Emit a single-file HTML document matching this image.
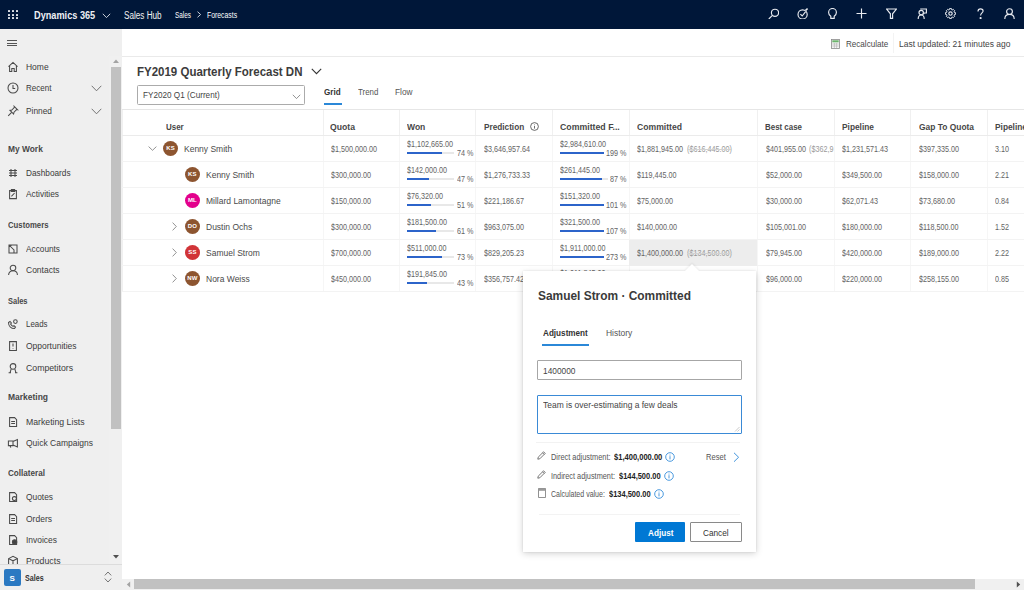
<!DOCTYPE html>
<html><head><meta charset="utf-8"><style>
html,body{margin:0;padding:0;}
body{width:1024px;height:590px;overflow:hidden;position:relative;background:#fff;font-family:"Liberation Sans",sans-serif;}
.t{position:absolute;white-space:nowrap;line-height:1;transform-origin:0 0;}
.r{position:absolute;}
.av{width:15px;height:15px;border-radius:50%;color:#fff;font-size:6px;font-weight:bold;line-height:15px;text-align:center;letter-spacing:0.1px;}
</style></head><body>
<div class="r" style="left:0px;top:0px;width:1024px;height:29px;background:#001739;"></div>
<div class="r" style="left:8.3px;top:10.1px;width:2px;height:2px;background:#eef1f6;border-radius:0.4px;"></div>
<div class="r" style="left:8.3px;top:13.6px;width:2px;height:2px;background:#eef1f6;border-radius:0.4px;"></div>
<div class="r" style="left:8.3px;top:17.1px;width:2px;height:2px;background:#eef1f6;border-radius:0.4px;"></div>
<div class="r" style="left:12.200000000000001px;top:10.1px;width:2px;height:2px;background:#eef1f6;border-radius:0.4px;"></div>
<div class="r" style="left:12.200000000000001px;top:13.6px;width:2px;height:2px;background:#eef1f6;border-radius:0.4px;"></div>
<div class="r" style="left:12.200000000000001px;top:17.1px;width:2px;height:2px;background:#eef1f6;border-radius:0.4px;"></div>
<div class="r" style="left:16.1px;top:10.1px;width:2px;height:2px;background:#eef1f6;border-radius:0.4px;"></div>
<div class="r" style="left:16.1px;top:13.6px;width:2px;height:2px;background:#eef1f6;border-radius:0.4px;"></div>
<div class="r" style="left:16.1px;top:17.1px;width:2px;height:2px;background:#eef1f6;border-radius:0.4px;"></div>
<div class="t" style="left:33.80px;top:10.00px;font-size:10.5px;color:#eef0f4;font-weight:bold;transform:scaleX(0.8737);">Dynamics 365</div>
<svg class="r" style="left:102px;top:13px" width="9" height="6" viewBox="0 0 9 6"><path d="M0.8 0.8 L4.5 4.6 L8.2 0.8" fill="none" stroke="#dfe3ea" stroke-width="0.9"/></svg>
<div class="t" style="left:123.70px;top:11.00px;font-size:10px;color:#f2f2f2;transform:scaleX(0.8149);">Sales Hub</div>
<div class="t" style="left:175.00px;top:11.00px;font-size:8.8px;color:#fff;transform:scaleX(0.7268);">Sales</div>
<svg class="r" style="left:196px;top:11px" width="6" height="7" viewBox="0 0 6 7"><path d="M1.5 0.7 L4.6 3.5 L1.5 6.3" fill="none" stroke="#dfe3ea" stroke-width="0.9"/></svg>
<div class="t" style="left:207.30px;top:11.00px;font-size:8.8px;color:#fff;transform:scaleX(0.7791);">Forecasts</div>
<svg class="r" style="left:767.5px;top:7.6px" width="11" height="11.5" viewBox="0 0 11 11.5" fill="none" stroke="#e8ebf0" stroke-width="1.15"><circle cx="7" cy="4.8" r="3.6"/><path d="M4.4 7.4 L0.8 11"/></svg>
<svg class="r" style="left:796.5px;top:7.6px" width="11" height="11.5" viewBox="0 0 11 11.5" fill="none" stroke="#e8ebf0" stroke-width="1.15"><circle cx="5.6" cy="6.4" r="4.6"/><path d="M3.4 6.2 L5.2 8 L8.6 3.6"/><path d="M8.6 2.4 L10.6 0.6" stroke-width="1.6"/></svg>
<svg class="r" style="left:826.5px;top:7.6px" width="11" height="11.5" viewBox="0 0 11 11.5" fill="none" stroke="#e8ebf0" stroke-width="1.15"><path d="M3.8 8.2 C2.2 7 1.6 5.8 1.6 4.4 A3.9 3.9 0 0 1 9.4 4.4 C9.4 5.8 8.8 7 7.2 8.2 L7.2 10.4 L3.8 10.4 Z"/></svg>
<svg class="r" style="left:855.5px;top:7.6px" width="11" height="11.5" viewBox="0 0 11 11.5" fill="none" stroke="#e8ebf0" stroke-width="1.15"><path d="M5.5 0.5 V10.5 M0.5 5.5 H10.5"/></svg>
<svg class="r" style="left:885.5px;top:7.6px" width="11" height="11.5" viewBox="0 0 11 11.5" fill="none" stroke="#e8ebf0" stroke-width="1.15"><path d="M0.6 1 H10.4 L6.6 5.8 V10.4 H4.4 V5.8 Z"/></svg>
<svg class="r" style="left:915.5px;top:7.6px" width="11" height="11.5" viewBox="0 0 11 11.5" fill="none" stroke="#e8ebf0" stroke-width="1.15"><path d="M4.2 1 H10.4 V5 H8.4 L7.2 6.4 M2.2 11 C2.2 8.2 3.8 7 5.2 7 C6.6 7 8.2 8.2 8.2 11"/><circle cx="5.2" cy="4.6" r="2.2"/></svg>
<svg class="r" style="left:944.5px;top:7.6px" width="11" height="11.5" viewBox="0 0 11 11.5" fill="none" stroke="#e8ebf0" stroke-width="1.15"><circle cx="5.5" cy="5.5" r="1.7"/><path d="M10.40 4.51 L10.40 6.49 L9.19 6.76 L9.00 7.22 L9.67 8.26 L8.26 9.67 L7.22 9.00 L6.76 9.19 L6.49 10.40 L4.51 10.40 L4.24 9.19 L3.78 9.00 L2.74 9.67 L1.33 8.26 L2.00 7.22 L1.81 6.76 L0.60 6.49 L0.60 4.51 L1.81 4.24 L2.00 3.78 L1.33 2.74 L2.74 1.33 L3.78 2.00 L4.24 1.81 L4.51 0.60 L6.49 0.60 L6.76 1.81 L7.22 2.00 L8.26 1.33 L9.67 2.74 L9.00 3.78 L9.19 4.24 Z" stroke-width="1"/></svg>
<svg class="r" style="left:974.5px;top:7.6px" width="11" height="11.5" viewBox="0 0 11 11.5" fill="none" stroke="#e8ebf0" stroke-width="1.15"><path d="M3 3.4 C3 1.8 4.2 0.8 5.6 0.8 C7 0.8 8.1 1.8 8.1 3.1 C8.1 4.8 5.6 5.2 5.6 7.4"/><circle cx="5.6" cy="10" r="0.5" fill="#e8ebf0"/></svg>
<svg class="r" style="left:1003.5px;top:7.6px" width="11" height="11.5" viewBox="0 0 11 11.5" fill="none" stroke="#e8ebf0" stroke-width="1.15"><circle cx="5.5" cy="3.6" r="2.9"/><path d="M0.8 11 C0.8 7.8 3 6.4 5.5 6.4 C8 6.4 10.2 7.8 10.2 11"/></svg>
<div class="r" style="left:0px;top:29px;width:122px;height:561px;background:#efefef;"></div>
<div class="r" style="left:109px;top:56px;width:13px;height:523px;background:#f0f0f0;"></div>
<div class="r" style="left:111px;top:67px;width:10px;height:362px;background:#c1c1c1;"></div>
<svg class="r" style="left:112px;top:58px" width="8" height="6" viewBox="0 0 8 6"><path d="M1 5 L4 1.5 L7 5 Z" fill="#a3a3a3"/></svg>
<svg class="r" style="left:112px;top:554px" width="8" height="6" viewBox="0 0 8 6"><path d="M1 1 L4 4.5 L7 1 Z" fill="#505050"/></svg>
<div class="r" style="left:7px;top:40.0px;width:10px;height:1.1px;background:#555;"></div>
<div class="r" style="left:7px;top:42.6px;width:10px;height:1.1px;background:#555;"></div>
<div class="r" style="left:7px;top:45.2px;width:10px;height:1.1px;background:#555;"></div>
<div class="t" style="left:26.20px;top:63.00px;font-size:9px;color:#3b3b3b;transform:scaleX(0.9413);">Home</div>
<svg class="r" style="left:7px;top:61.0px" width="12" height="12" viewBox="0 0 12 12" fill="none" stroke="#4a4a4a" stroke-width="1.05"><path d="M1.5 5.6 L6 1.4 L10.5 5.6 M2.6 4.8 V10.4 H4.8 V7.4 H7.2 V10.4 H9.4 V4.8"/></svg>
<div class="t" style="left:26.20px;top:84.00px;font-size:9px;color:#3b3b3b;transform:scaleX(0.8907);">Recent</div>
<svg class="r" style="left:7px;top:82.2px" width="12" height="12" viewBox="0 0 12 12" fill="none" stroke="#4a4a4a" stroke-width="1.05"><circle cx="6" cy="6" r="5"/><path d="M6 3 V6.4 H8.2"/></svg>
<div class="t" style="left:26.20px;top:107.00px;font-size:9px;color:#3b3b3b;transform:scaleX(0.9277);">Pinned</div>
<svg class="r" style="left:7px;top:105.2px" width="12" height="12" viewBox="0 0 12 12" fill="none" stroke="#4a4a4a" stroke-width="1.05"><path d="M1.2 10.8 L4.4 7.6 M3 5.4 L6.6 9 L7 7.2 L9.6 4.6 L10.6 4.8 L7.2 1.4 L7.4 2.4 L4.8 5 Z"/></svg>
<div class="t" style="left:7.70px;top:145.00px;font-size:9px;color:#474747;font-weight:bold;transform:scaleX(0.9320);">My Work</div>
<div class="t" style="left:7.70px;top:221.00px;font-size:9px;color:#474747;font-weight:bold;transform:scaleX(0.8615);">Customers</div>
<div class="t" style="left:7.70px;top:297.00px;font-size:9px;color:#474747;font-weight:bold;transform:scaleX(0.8291);">Sales</div>
<div class="t" style="left:7.70px;top:393.00px;font-size:9px;color:#474747;font-weight:bold;transform:scaleX(0.9410);">Marketing</div>
<div class="t" style="left:7.70px;top:469.00px;font-size:9px;color:#474747;font-weight:bold;transform:scaleX(0.9021);">Collateral</div>
<div class="t" style="left:26.30px;top:169.00px;font-size:9px;color:#3b3b3b;transform:scaleX(0.9190);">Dashboards</div>
<svg class="r" style="left:7px;top:167px" width="12" height="12" viewBox="0 0 12 12" fill="none" stroke="#4a4a4a" stroke-width="1.05"><path d="M2 3.5 H10 M2 6 H10 M2 8.5 H10 M4 2 V10 M8 2 V10"/></svg>
<div class="t" style="left:26.30px;top:190.00px;font-size:9px;color:#3b3b3b;transform:scaleX(0.9294);">Activities</div>
<svg class="r" style="left:7px;top:188.4px" width="12" height="12" viewBox="0 0 12 12" fill="none" stroke="#4a4a4a" stroke-width="1.05"><path d="M2.6 2.6 H9.4 V10.6 H2.6 Z M4.4 1.6 H7.6 V3.4 H4.4 Z M4.4 8.4 L7.6 5"/></svg>
<div class="t" style="left:26.30px;top:245.00px;font-size:9px;color:#3b3b3b;transform:scaleX(0.9184);">Accounts</div>
<svg class="r" style="left:7px;top:242.6px" width="12" height="12" viewBox="0 0 12 12" fill="none" stroke="#4a4a4a" stroke-width="1.05"><path d="M2 2 H10 V10 H2 Z M2 2 L7 7 V10 M4 2 V3"/></svg>
<div class="t" style="left:26.30px;top:266.00px;font-size:9px;color:#3b3b3b;transform:scaleX(0.9432);">Contacts</div>
<svg class="r" style="left:7px;top:264px" width="12" height="12" viewBox="0 0 12 12" fill="none" stroke="#4a4a4a" stroke-width="1.05"><circle cx="6" cy="4" r="2.8"/><path d="M1.6 11 C1.6 8.2 3.6 6.8 6 6.8 C8.4 6.8 10.4 8.2 10.4 11"/></svg>
<div class="t" style="left:26.30px;top:320.00px;font-size:9px;color:#3b3b3b;transform:scaleX(0.8768);">Leads</div>
<svg class="r" style="left:7px;top:318.2px" width="12" height="12" viewBox="0 0 12 12" fill="none" stroke="#4a4a4a" stroke-width="1.05"><path d="M1.5 4.5 C1.5 8 4 10.5 7.5 10.5 L8.5 9 L7 7.6 L6 8.4 C4.8 7.8 4.2 7.2 3.6 6 L4.4 5 L3 3.5 Z"/><circle cx="8.4" cy="3.6" r="1.8"/></svg>
<div class="t" style="left:26.30px;top:342.00px;font-size:9px;color:#3b3b3b;transform:scaleX(0.9434);">Opportunities</div>
<svg class="r" style="left:7px;top:339.9px" width="12" height="12" viewBox="0 0 12 12" fill="none" stroke="#4a4a4a" stroke-width="1.05"><path d="M2.6 1.6 H9.4 V10.4 H2.6 Z M6 3.6 V6.6 M6 8 V8.6"/></svg>
<div class="t" style="left:26.30px;top:364.00px;font-size:9px;color:#3b3b3b;transform:scaleX(0.9687);">Competitors</div>
<svg class="r" style="left:7px;top:361.5px" width="12" height="12" viewBox="0 0 12 12" fill="none" stroke="#4a4a4a" stroke-width="1.05"><circle cx="6" cy="4.4" r="2.8"/><path d="M3 10.8 L4.2 6.8 M9 10.8 L7.8 6.8 M1.6 10.8 H4 M8 10.8 H10.4"/></svg>
<div class="t" style="left:26.30px;top:418.00px;font-size:9px;color:#3b3b3b;transform:scaleX(0.9666);">Marketing Lists</div>
<svg class="r" style="left:7px;top:415.7px" width="12" height="12" viewBox="0 0 12 12" fill="none" stroke="#4a4a4a" stroke-width="1.05"><path d="M2.6 1.6 H7.6 L9.6 3.6 V10.4 H2.6 Z M4.2 5.4 H8 M4.2 7.4 H8"/></svg>
<div class="t" style="left:26.30px;top:439.00px;font-size:9px;color:#3b3b3b;transform:scaleX(0.9433);">Quick Campaigns</div>
<svg class="r" style="left:7px;top:436.8px" width="12" height="12" viewBox="0 0 12 12" fill="none" stroke="#4a4a4a" stroke-width="1.05"><path d="M1.4 4 H6 V8.6 H1.4 Z M6 4.6 L10.4 2.6 V10 L6 8 M3 8.6 L3.8 10.6"/></svg>
<div class="t" style="left:26.30px;top:493.00px;font-size:9px;color:#3b3b3b;transform:scaleX(0.9305);">Quotes</div>
<svg class="r" style="left:7px;top:491px" width="12" height="12" viewBox="0 0 12 12" fill="none" stroke="#4a4a4a" stroke-width="1.05"><path d="M2.6 1.6 H7.6 L9.6 3.6 V10.4 H2.6 Z"/><circle cx="7.4" cy="7.6" r="2"/></svg>
<div class="t" style="left:26.30px;top:515.00px;font-size:9px;color:#3b3b3b;transform:scaleX(0.9452);">Orders</div>
<svg class="r" style="left:7px;top:512.6px" width="12" height="12" viewBox="0 0 12 12" fill="none" stroke="#4a4a4a" stroke-width="1.05"><path d="M2.6 1.6 H7.6 L9.6 3.6 V10.4 H2.6 Z M4.2 5.4 H8 M4.2 7.4 H8"/></svg>
<div class="t" style="left:26.30px;top:536.00px;font-size:9px;color:#3b3b3b;transform:scaleX(0.9389);">Invoices</div>
<svg class="r" style="left:7px;top:534.2px" width="12" height="12" viewBox="0 0 12 12" fill="none" stroke="#4a4a4a" stroke-width="1.05"><path d="M2.6 1.6 H7.6 L9.6 3.6 V10.4 H2.6 Z"/><circle cx="7.6" cy="8" r="2.2" fill="#444"/></svg>
<div class="t" style="left:26.30px;top:557.00px;font-size:9px;color:#3b3b3b;transform:scaleX(0.9713);">Products</div>
<svg class="r" style="left:7px;top:555.4px" width="12" height="12" viewBox="0 0 12 12" fill="none" stroke="#4a4a4a" stroke-width="1.05"><path d="M1.6 3.6 L6 1.4 L10.4 3.6 V10.4 H1.6 Z M1.6 3.6 L6 5.8 L10.4 3.6 M6 5.8 V10.4"/></svg>
<svg class="r" style="left:91px;top:85.1px" width="11" height="7" viewBox="0 0 11 7"><path d="M0.7 0.8 L5.5 5.8 L10.3 0.8" fill="none" stroke="#666" stroke-width="0.9"/></svg>
<svg class="r" style="left:91px;top:107.6px" width="11" height="7" viewBox="0 0 11 7"><path d="M0.7 0.8 L5.5 5.8 L10.3 0.8" fill="none" stroke="#666" stroke-width="0.9"/></svg>
<div class="r" style="left:0px;top:564px;width:122px;height:26px;background:#efefef;border-top:1px solid #dcdcdc;"></div>
<div class="r" style="left:4px;top:569px;width:17px;height:17px;background:#2b79c2;border-radius:2px;"></div>
<div class="t" style="left:9.60px;top:575.00px;font-size:8px;color:#fff;font-weight:bold;">S</div>
<div class="t" style="left:25.30px;top:574.00px;font-size:9px;color:#333;font-weight:bold;transform:scaleX(0.7908);">Sales</div>
<svg class="r" style="left:104px;top:571px" width="8" height="12" viewBox="0 0 8 12"><path d="M0.8 4.4 L4 1 L7.2 4.4 M0.8 7.6 L4 11 L7.2 7.6" fill="none" stroke="#666" stroke-width="0.9"/></svg>
<div class="r" style="left:122px;top:56px;width:902px;height:1px;background:#eaeaea;"></div>
<svg class="r" style="left:831px;top:38.5px" width="9" height="10" viewBox="0 0 9 10"><rect x="0.5" y="0.5" width="8" height="9" fill="#f4f4f4" stroke="#8a8a8a" stroke-width="0.8"/><rect x="1.3" y="1.3" width="6.4" height="2" fill="#6bb36b"/><path d="M1.3 5 H7.7 M1.3 7 H7.7 M3.4 4 V9 M5.6 4 V9" stroke="#b0b0b0" stroke-width="0.6"/></svg>
<div class="t" style="left:845.50px;top:39.00px;font-size:9.6px;color:#484848;transform:scaleX(0.8413);">Recalculate</div>
<div class="r" style="left:892.5px;top:33px;width:1px;height:20px;background:#f3f3f3;"></div>
<div class="t" style="left:898.70px;top:39.00px;font-size:9.6px;color:#444;transform:scaleX(0.8815);">Last updated: 21 minutes ago</div>
<div class="t" style="left:137.40px;top:66.00px;font-size:12.8px;color:#3c3c3c;font-weight:bold;transform:scaleX(0.8982);">FY2019 Quarterly Forecast DN</div>
<svg class="r" style="left:310.5px;top:67.5px" width="11" height="7" viewBox="0 0 11 7"><path d="M0.8 0.9 L5.5 5.6 L10.2 0.9" fill="none" stroke="#333" stroke-width="1.1"/></svg>
<div class="r" style="left:137px;top:85px;width:167.5px;height:19.5px;background:#fff;box-sizing:border-box;border:1px solid #ababab;border-radius:1.5px;"></div>
<div class="t" style="left:142.70px;top:91.00px;font-size:9.2px;color:#444;transform:scaleX(0.8887);">FY2020 Q1 (Current)</div>
<svg class="r" style="left:291.5px;top:94px" width="9" height="6" viewBox="0 0 9 6"><path d="M0.8 0.8 L4.5 4.6 L8.2 0.8" fill="none" stroke="#777" stroke-width="0.8"/></svg>
<div class="t" style="left:324.40px;top:87.00px;font-size:9.5px;color:#333;font-weight:bold;transform:scaleX(0.8500);">Grid</div>
<div class="r" style="left:323.8px;top:103px;width:17.8px;height:2px;background:#2b88d8;"></div>
<div class="t" style="left:357.70px;top:87.00px;font-size:9.5px;color:#555;transform:scaleX(0.8297);">Trend</div>
<div class="t" style="left:394.80px;top:87.00px;font-size:9.5px;color:#555;transform:scaleX(0.8725);">Flow</div>
<div class="r" style="left:122px;top:108.5px;width:902px;height:1.6px;background:#e6e6e6;"></div>
<div class="r" style="left:122px;top:110px;width:1px;height:182px;background:#f0f0f0;"></div>
<div class="r" style="left:322.8px;top:110px;width:1px;height:26px;background:#f0f0f0;"></div>
<div class="r" style="left:322.8px;top:136px;width:1px;height:156px;background:#f6f6f6;"></div>
<div class="r" style="left:398.8px;top:110px;width:1px;height:26px;background:#f0f0f0;"></div>
<div class="r" style="left:398.8px;top:136px;width:1px;height:156px;background:#f6f6f6;"></div>
<div class="r" style="left:475.2px;top:110px;width:1px;height:26px;background:#f0f0f0;"></div>
<div class="r" style="left:475.2px;top:136px;width:1px;height:156px;background:#f6f6f6;"></div>
<div class="r" style="left:552.2px;top:110px;width:1px;height:26px;background:#f0f0f0;"></div>
<div class="r" style="left:552.2px;top:136px;width:1px;height:156px;background:#f6f6f6;"></div>
<div class="r" style="left:629px;top:110px;width:1px;height:26px;background:#f0f0f0;"></div>
<div class="r" style="left:629px;top:136px;width:1px;height:156px;background:#f6f6f6;"></div>
<div class="r" style="left:757px;top:110px;width:1px;height:26px;background:#f0f0f0;"></div>
<div class="r" style="left:757px;top:136px;width:1px;height:156px;background:#f6f6f6;"></div>
<div class="r" style="left:834px;top:110px;width:1px;height:26px;background:#f0f0f0;"></div>
<div class="r" style="left:834px;top:136px;width:1px;height:156px;background:#f6f6f6;"></div>
<div class="r" style="left:910.4px;top:110px;width:1px;height:26px;background:#f0f0f0;"></div>
<div class="r" style="left:910.4px;top:136px;width:1px;height:156px;background:#f6f6f6;"></div>
<div class="r" style="left:987.4px;top:110px;width:1px;height:26px;background:#f0f0f0;"></div>
<div class="r" style="left:987.4px;top:136px;width:1px;height:156px;background:#f6f6f6;"></div>
<div class="r" style="left:122px;top:135px;width:902px;height:1px;background:#ebebeb;"></div>
<div class="r" style="left:122px;top:161px;width:902px;height:1px;background:#f3f3f3;"></div>
<div class="r" style="left:122px;top:187px;width:902px;height:1px;background:#f3f3f3;"></div>
<div class="r" style="left:122px;top:213px;width:902px;height:1px;background:#f3f3f3;"></div>
<div class="r" style="left:122px;top:239px;width:902px;height:1px;background:#f3f3f3;"></div>
<div class="r" style="left:122px;top:265px;width:902px;height:1px;background:#f3f3f3;"></div>
<div class="r" style="left:122px;top:291px;width:902px;height:1px;background:#f3f3f3;"></div>
<div class="r" style="left:629px;top:240px;width:127.5px;height:25.5px;background:#ededed;"></div>
<div class="t" style="left:166.00px;top:123.00px;font-size:9px;color:#474747;font-weight:bold;transform:scaleX(0.8844);">User</div>
<div class="t" style="left:330.00px;top:123.00px;font-size:9px;color:#474747;font-weight:bold;transform:scaleX(0.9616);">Quota</div>
<div class="t" style="left:406.90px;top:123.00px;font-size:9px;color:#474747;font-weight:bold;transform:scaleX(0.9468);">Won</div>
<div class="t" style="left:483.80px;top:123.00px;font-size:9px;color:#474747;font-weight:bold;transform:scaleX(0.9135);">Prediction</div>
<svg class="r" style="left:529.5px;top:121.5px" width="9" height="9" viewBox="0 0 9 9"><circle cx="4.5" cy="4.5" r="3.9" fill="none" stroke="#444" stroke-width="0.8"/><path d="M4.5 3.8 V6.6" stroke="#444" stroke-width="0.8"/><circle cx="4.5" cy="2.6" r="0.45" fill="#444"/></svg>
<div class="t" style="left:560.00px;top:123.00px;font-size:9px;color:#474747;font-weight:bold;transform:scaleX(0.9723);">Committed F...</div>
<div class="t" style="left:637.00px;top:123.00px;font-size:9px;color:#474747;font-weight:bold;transform:scaleX(0.9574);">Committed</div>
<div class="t" style="left:765.30px;top:123.00px;font-size:9px;color:#474747;font-weight:bold;transform:scaleX(0.8803);">Best case</div>
<div class="t" style="left:842.00px;top:123.00px;font-size:9px;color:#474747;font-weight:bold;transform:scaleX(0.9272);">Pipeline</div>
<div class="t" style="left:918.50px;top:123.00px;font-size:9px;color:#474747;font-weight:bold;transform:scaleX(0.9349);">Gap To Quota</div>
<div class="t" style="left:995.00px;top:123.00px;font-size:9px;color:#474747;font-weight:bold;transform:scaleX(0.9272);">Pipeline</div>
<div class="r" style="left:1024px;top:0px;width:0px;height:0px;background:none;"></div>
<svg class="r" style="left:148px;top:145.7px" width="9" height="5" viewBox="0 0 9 5"><path d="M0.6 0.6 L4.5 4.3 L8.4 0.6" fill="none" stroke="#777" stroke-width="0.8"/></svg>
<div class="r av" style="left:163.1px;top:140.5px;background:#8d5530">KS</div>
<div class="t" style="left:184.40px;top:145.00px;font-size:9.3px;color:#4a4a4a;transform:scaleX(0.9140);">Kenny Smith</div>
<div class="t" style="left:330.60px;top:145.00px;font-size:9px;color:#646464;transform:scaleX(0.8000);">$1,500,000.00</div>
<div class="t" style="left:407.20px;top:140.00px;font-size:9px;color:#646464;transform:scaleX(0.8000);">$1,102,665.00</div>
<div class="t" style="left:456.89px;top:149.00px;font-size:9px;color:#646464;transform:scaleX(0.8000);">74 %</div>
<div class="r" style="left:407.2px;top:152px;width:47.19px;height:2.2px;background:#e8e8e8;"></div>
<div class="r" style="left:407.2px;top:152px;width:34.92px;height:2.3px;background:#2c64ca;"></div>
<div class="t" style="left:483.80px;top:145.00px;font-size:9px;color:#646464;transform:scaleX(0.8000);">$3,646,957.64</div>
<div class="t" style="left:560.20px;top:140.00px;font-size:9px;color:#646464;transform:scaleX(0.8000);">$2,984,610.00</div>
<div class="t" style="left:606.38px;top:149.00px;font-size:9px;color:#646464;transform:scaleX(0.8000);">199 %</div>
<div class="r" style="left:560.2px;top:152px;width:43.68px;height:2.2px;background:#e8e8e8;"></div>
<div class="r" style="left:560.2px;top:152px;width:43.68px;height:2.3px;background:#2c64ca;"></div>
<div class="t" style="left:637.00px;top:145.00px;font-size:9px;color:#646464;transform:scaleX(0.8000);">$1,881,945.00</div>
<div class="t" style="left:686.65px;top:145.00px;font-size:9px;color:#9a9a9a;transform:scaleX(0.8000);text-decoration:line-through;text-decoration-color:#d2d2d2;">($616,445.00)</div>
<div class="t" style="left:765.60px;top:145.00px;font-size:9px;color:#646464;transform:scaleX(0.8000);">$401,955.00</div>
<div class="r" style="left:808px;top:143px;width:26px;height:12px;overflow:hidden">

<div class="t" style="left:1.00px;top:2.00px;font-size:9px;color:#9a9a9a;transform:scaleX(0.8000);">($362,9</div>
</div>
<div class="t" style="left:842.00px;top:145.00px;font-size:9px;color:#646464;transform:scaleX(0.8000);">$1,231,571.43</div>
<div class="t" style="left:918.50px;top:145.00px;font-size:9px;color:#646464;transform:scaleX(0.8000);">$397,335.00</div>
<div class="t" style="left:995.00px;top:145.00px;font-size:9px;color:#646464;transform:scaleX(0.8000);">3.10</div>
<div class="r av" style="left:184.9px;top:166.5px;background:#8d5530">KS</div>
<div class="t" style="left:205.90px;top:171.00px;font-size:9.3px;color:#4a4a4a;transform:scaleX(0.9140);">Kenny Smith</div>
<div class="t" style="left:330.60px;top:171.00px;font-size:9px;color:#646464;transform:scaleX(0.8000);">$300,000.00</div>
<div class="t" style="left:407.20px;top:166.00px;font-size:9px;color:#646464;transform:scaleX(0.8000);">$142,000.00</div>
<div class="t" style="left:456.89px;top:175.00px;font-size:9px;color:#646464;transform:scaleX(0.8000);">47 %</div>
<div class="r" style="left:407.2px;top:178px;width:47.19px;height:2.2px;background:#e8e8e8;"></div>
<div class="r" style="left:407.2px;top:178px;width:22.18px;height:2.3px;background:#2c64ca;"></div>
<div class="t" style="left:483.80px;top:171.00px;font-size:9px;color:#646464;transform:scaleX(0.8000);">$1,276,733.33</div>
<div class="t" style="left:560.20px;top:166.00px;font-size:9px;color:#646464;transform:scaleX(0.8000);">$261,445.00</div>
<div class="t" style="left:610.39px;top:175.00px;font-size:9px;color:#646464;transform:scaleX(0.8000);">87 %</div>
<div class="r" style="left:560.2px;top:178px;width:47.69px;height:2.2px;background:#e8e8e8;"></div>
<div class="r" style="left:560.2px;top:178px;width:41.49px;height:2.3px;background:#2c64ca;"></div>
<div class="t" style="left:637.00px;top:171.00px;font-size:9px;color:#646464;transform:scaleX(0.8000);">$119,445.00</div>
<div class="t" style="left:765.60px;top:171.00px;font-size:9px;color:#646464;transform:scaleX(0.8000);">$52,000.00</div>
<div class="t" style="left:842.00px;top:171.00px;font-size:9px;color:#646464;transform:scaleX(0.8000);">$349,500.00</div>
<div class="t" style="left:918.50px;top:171.00px;font-size:9px;color:#646464;transform:scaleX(0.8000);">$158,000.00</div>
<div class="t" style="left:995.00px;top:171.00px;font-size:9px;color:#646464;transform:scaleX(0.8000);">2.21</div>
<div class="r av" style="left:184.9px;top:192.5px;background:#e3008c">ML</div>
<div class="t" style="left:205.90px;top:197.00px;font-size:9.3px;color:#4a4a4a;transform:scaleX(0.9140);">Millard Lamontagne</div>
<div class="t" style="left:330.60px;top:197.00px;font-size:9px;color:#646464;transform:scaleX(0.8000);">$150,000.00</div>
<div class="t" style="left:407.20px;top:192.00px;font-size:9px;color:#646464;transform:scaleX(0.8000);">$76,320.00</div>
<div class="t" style="left:456.89px;top:201.00px;font-size:9px;color:#646464;transform:scaleX(0.8000);">51 %</div>
<div class="r" style="left:407.2px;top:204px;width:47.19px;height:2.2px;background:#e8e8e8;"></div>
<div class="r" style="left:407.2px;top:204px;width:24.07px;height:2.3px;background:#2c64ca;"></div>
<div class="t" style="left:483.80px;top:197.00px;font-size:9px;color:#646464;transform:scaleX(0.8000);">$221,186.67</div>
<div class="t" style="left:560.20px;top:192.00px;font-size:9px;color:#646464;transform:scaleX(0.8000);">$151,320.00</div>
<div class="t" style="left:606.38px;top:201.00px;font-size:9px;color:#646464;transform:scaleX(0.8000);">101 %</div>
<div class="r" style="left:560.2px;top:204px;width:43.68px;height:2.2px;background:#e8e8e8;"></div>
<div class="r" style="left:560.2px;top:204px;width:43.68px;height:2.3px;background:#2c64ca;"></div>
<div class="t" style="left:637.00px;top:197.00px;font-size:9px;color:#646464;transform:scaleX(0.8000);">$75,000.00</div>
<div class="t" style="left:765.60px;top:197.00px;font-size:9px;color:#646464;transform:scaleX(0.8000);">$30,000.00</div>
<div class="t" style="left:842.00px;top:197.00px;font-size:9px;color:#646464;transform:scaleX(0.8000);">$62,071.43</div>
<div class="t" style="left:918.50px;top:197.00px;font-size:9px;color:#646464;transform:scaleX(0.8000);">$73,680.00</div>
<div class="t" style="left:995.00px;top:197.00px;font-size:9px;color:#646464;transform:scaleX(0.8000);">0.84</div>
<svg class="r" style="left:171.5px;top:222px" width="5" height="9" viewBox="0 0 5 9"><path d="M0.6 0.6 L4.3 4.5 L0.6 8.4" fill="none" stroke="#777" stroke-width="0.8"/></svg>
<div class="r av" style="left:184.9px;top:218.5px;background:#8d5530">DO</div>
<div class="t" style="left:205.90px;top:223.00px;font-size:9.3px;color:#4a4a4a;transform:scaleX(0.9140);">Dustin Ochs</div>
<div class="t" style="left:330.60px;top:223.00px;font-size:9px;color:#646464;transform:scaleX(0.8000);">$300,000.00</div>
<div class="t" style="left:407.20px;top:218.00px;font-size:9px;color:#646464;transform:scaleX(0.8000);">$181,500.00</div>
<div class="t" style="left:456.89px;top:227.00px;font-size:9px;color:#646464;transform:scaleX(0.8000);">61 %</div>
<div class="r" style="left:407.2px;top:230px;width:47.19px;height:2.2px;background:#e8e8e8;"></div>
<div class="r" style="left:407.2px;top:230px;width:28.79px;height:2.3px;background:#2c64ca;"></div>
<div class="t" style="left:483.80px;top:223.00px;font-size:9px;color:#646464;transform:scaleX(0.8000);">$963,075.00</div>
<div class="t" style="left:560.20px;top:218.00px;font-size:9px;color:#646464;transform:scaleX(0.8000);">$321,500.00</div>
<div class="t" style="left:606.38px;top:227.00px;font-size:9px;color:#646464;transform:scaleX(0.8000);">107 %</div>
<div class="r" style="left:560.2px;top:230px;width:43.68px;height:2.2px;background:#e8e8e8;"></div>
<div class="r" style="left:560.2px;top:230px;width:43.68px;height:2.3px;background:#2c64ca;"></div>
<div class="t" style="left:637.00px;top:223.00px;font-size:9px;color:#646464;transform:scaleX(0.8000);">$140,000.00</div>
<div class="t" style="left:765.60px;top:223.00px;font-size:9px;color:#646464;transform:scaleX(0.8000);">$105,001.00</div>
<div class="t" style="left:842.00px;top:223.00px;font-size:9px;color:#646464;transform:scaleX(0.8000);">$180,000.00</div>
<div class="t" style="left:918.50px;top:223.00px;font-size:9px;color:#646464;transform:scaleX(0.8000);">$118,500.00</div>
<div class="t" style="left:995.00px;top:223.00px;font-size:9px;color:#646464;transform:scaleX(0.8000);">1.52</div>
<svg class="r" style="left:171.5px;top:248px" width="5" height="9" viewBox="0 0 5 9"><path d="M0.6 0.6 L4.3 4.5 L0.6 8.4" fill="none" stroke="#777" stroke-width="0.8"/></svg>
<div class="r av" style="left:184.9px;top:244.5px;background:#d13438">SS</div>
<div class="t" style="left:205.90px;top:249.00px;font-size:9.3px;color:#4a4a4a;transform:scaleX(0.9140);">Samuel Strom</div>
<div class="t" style="left:330.60px;top:249.00px;font-size:9px;color:#646464;transform:scaleX(0.8000);">$700,000.00</div>
<div class="t" style="left:407.20px;top:244.00px;font-size:9px;color:#646464;transform:scaleX(0.8000);">$511,000.00</div>
<div class="t" style="left:456.89px;top:253.00px;font-size:9px;color:#646464;transform:scaleX(0.8000);">73 %</div>
<div class="r" style="left:407.2px;top:256px;width:47.19px;height:2.2px;background:#e8e8e8;"></div>
<div class="r" style="left:407.2px;top:256px;width:34.45px;height:2.3px;background:#2c64ca;"></div>
<div class="t" style="left:483.80px;top:249.00px;font-size:9px;color:#646464;transform:scaleX(0.8000);">$829,205.23</div>
<div class="t" style="left:560.20px;top:244.00px;font-size:9px;color:#646464;transform:scaleX(0.8000);">$1,911,000.00</div>
<div class="t" style="left:606.38px;top:253.00px;font-size:9px;color:#646464;transform:scaleX(0.8000);">273 %</div>
<div class="r" style="left:560.2px;top:256px;width:43.68px;height:2.2px;background:#e8e8e8;"></div>
<div class="r" style="left:560.2px;top:256px;width:43.68px;height:2.3px;background:#2c64ca;"></div>
<div class="t" style="left:637.00px;top:249.00px;font-size:9px;color:#646464;transform:scaleX(0.8000);">$1,400,000.00</div>
<div class="t" style="left:686.65px;top:249.00px;font-size:9px;color:#9a9a9a;transform:scaleX(0.8000);text-decoration:line-through;text-decoration-color:#d2d2d2;">($134,500.00)</div>
<div class="t" style="left:765.60px;top:249.00px;font-size:9px;color:#646464;transform:scaleX(0.8000);">$79,945.00</div>
<div class="t" style="left:842.00px;top:249.00px;font-size:9px;color:#646464;transform:scaleX(0.8000);">$420,000.00</div>
<div class="t" style="left:918.50px;top:249.00px;font-size:9px;color:#646464;transform:scaleX(0.8000);">$189,000.00</div>
<div class="t" style="left:995.00px;top:249.00px;font-size:9px;color:#646464;transform:scaleX(0.8000);">2.22</div>
<svg class="r" style="left:171.5px;top:274px" width="5" height="9" viewBox="0 0 5 9"><path d="M0.6 0.6 L4.3 4.5 L0.6 8.4" fill="none" stroke="#777" stroke-width="0.8"/></svg>
<div class="r av" style="left:184.9px;top:270.5px;background:#8d5530">NW</div>
<div class="t" style="left:205.90px;top:275.00px;font-size:9.3px;color:#4a4a4a;transform:scaleX(0.9140);">Nora Weiss</div>
<div class="t" style="left:330.60px;top:275.00px;font-size:9px;color:#646464;transform:scaleX(0.8000);">$450,000.00</div>
<div class="t" style="left:407.20px;top:270.00px;font-size:9px;color:#646464;transform:scaleX(0.8000);">$191,845.00</div>
<div class="t" style="left:456.89px;top:279.00px;font-size:9px;color:#646464;transform:scaleX(0.8000);">43 %</div>
<div class="r" style="left:407.2px;top:282px;width:47.19px;height:2.2px;background:#e8e8e8;"></div>
<div class="r" style="left:407.2px;top:282px;width:20.29px;height:2.3px;background:#2c64ca;"></div>
<div class="t" style="left:483.80px;top:275.00px;font-size:9px;color:#646464;transform:scaleX(0.8000);">$356,757.42</div>
<div class="t" style="left:560.20px;top:269.00px;font-size:9px;color:#646464;transform:scaleX(0.8000);">$1,011,845.00</div>
<div class="t" style="left:765.60px;top:275.00px;font-size:9px;color:#646464;transform:scaleX(0.8000);">$96,000.00</div>
<div class="t" style="left:842.00px;top:275.00px;font-size:9px;color:#646464;transform:scaleX(0.8000);">$220,000.00</div>
<div class="t" style="left:918.50px;top:275.00px;font-size:9px;color:#646464;transform:scaleX(0.8000);">$258,155.00</div>
<div class="t" style="left:995.00px;top:275.00px;font-size:9px;color:#646464;transform:scaleX(0.8000);">0.85</div>
<div class="r" style="left:522.5px;top:270.5px;width:233.5px;height:281px;background:#fff;box-shadow:0 1.5px 7px rgba(0,0,0,0.18),0 0 2px rgba(0,0,0,0.10);"></div>
<div class="r" style="left:687px;top:266px;width:10px;height:10px;background:#fff;transform:rotate(45deg);box-shadow:-1px -1px 2px rgba(0,0,0,0.06);"></div>
<div class="r" style="left:682px;top:271px;width:22px;height:8px;background:#fff;"></div>
<div class="t" style="left:537.60px;top:290.00px;font-size:12.8px;color:#3a3a3a;font-weight:bold;transform:scaleX(0.9313);">Samuel Strom · Committed</div>
<div class="t" style="left:543.40px;top:328.00px;font-size:9.5px;color:#333;font-weight:bold;transform:scaleX(0.8574);">Adjustment</div>
<div class="t" style="left:605.80px;top:328.00px;font-size:9.5px;color:#555;transform:scaleX(0.8898);">History</div>
<div class="r" style="left:542px;top:344.2px;width:47.4px;height:1.8px;background:#2b88d8;"></div>
<div class="r" style="left:537.4px;top:360.1px;width:204.4px;height:19.8px;background:#fff;box-sizing:border-box;border:1px solid #a6a6a6;border-radius:1px;"></div>
<div class="t" style="left:543.00px;top:367.00px;font-size:9.2px;color:#444;transform:scaleX(0.9074);">1400000</div>
<div class="r" style="left:537.4px;top:395.4px;width:204.4px;height:38.2px;background:#fff;box-sizing:border-box;border:1.8px solid #3a8ad6;border-radius:1px;"></div>
<svg class="r" style="left:734px;top:426px" width="6" height="6" viewBox="0 0 6 6"><path d="M5.5 1 L1 5.5 M5.5 3.5 L3.5 5.5" stroke="#aaa" stroke-width="0.6"/></svg>
<div class="t" style="left:543.00px;top:401.00px;font-size:9.2px;color:#444;transform:scaleX(0.9211);">Team is over-estimating a few deals</div>
<div class="r" style="left:536px;top:442px;width:203.5px;height:1px;background:#f2f2f2;"></div>
<svg class="r" style="left:537.2px;top:450.8px" width="9" height="9" viewBox="0 0 9 9"><path d="M0.8 8.2 L1.2 6.2 L6.6 0.8 L8.2 2.4 L2.8 7.8 Z M5.6 1.8 L7.2 3.4" fill="none" stroke="#555" stroke-width="0.8"/></svg>
<div class="t" style="left:550.80px;top:453.00px;font-size:8.8px;color:#555;transform:scaleX(0.8404);">Direct adjustment:</div>
<div class="t" style="left:613.70px;top:453.00px;font-size:8.8px;color:#222;font-weight:bold;transform:scaleX(0.8582);">$1,400,000.00</div>
<svg class="r" style="left:665px;top:452px" width="10" height="10" viewBox="0 0 10 10"><circle cx="5" cy="5" r="4.3" fill="none" stroke="#2b88d8" stroke-width="0.85"/><path d="M5 4.2 V7.4" stroke="#2b88d8" stroke-width="0.85"/><circle cx="5" cy="2.9" r="0.5" fill="#2b88d8"/></svg>
<div class="t" style="left:705.80px;top:453.00px;font-size:9.3px;color:#555;transform:scaleX(0.8150);">Reset</div>
<svg class="r" style="left:733px;top:451.5px" width="7" height="10.5" viewBox="0 0 7 10.5"><path d="M1 0.8 L5.6 5.25 L1 9.7" fill="none" stroke="#2b88d8" stroke-width="0.9"/></svg>
<svg class="r" style="left:537.2px;top:469.6px" width="9" height="9" viewBox="0 0 9 9"><path d="M0.8 8.2 L1.2 6.2 L6.6 0.8 L8.2 2.4 L2.8 7.8 Z M5.6 1.8 L7.2 3.4" fill="none" stroke="#555" stroke-width="0.8"/></svg>
<div class="t" style="left:550.80px;top:472.00px;font-size:8.8px;color:#555;transform:scaleX(0.8334);">Indirect adjustment:</div>
<div class="t" style="left:619.30px;top:472.00px;font-size:8.8px;color:#222;font-weight:bold;transform:scaleX(0.8500);">$144,500.00</div>
<svg class="r" style="left:664px;top:470.8px" width="10" height="10" viewBox="0 0 10 10"><circle cx="5" cy="5" r="4.3" fill="none" stroke="#2b88d8" stroke-width="0.85"/><path d="M5 4.2 V7.4" stroke="#2b88d8" stroke-width="0.85"/><circle cx="5" cy="2.9" r="0.5" fill="#2b88d8"/></svg>
<svg class="r" style="left:537.5px;top:487.5px" width="8" height="10" viewBox="0 0 8 10"><rect x="0.6" y="0.6" width="6.8" height="8.8" fill="none" stroke="#777" stroke-width="0.8"/><rect x="0.6" y="0.6" width="6.8" height="2.2" fill="#999"/></svg>
<div class="t" style="left:550.80px;top:490.00px;font-size:8.8px;color:#555;transform:scaleX(0.7984);">Calculated value:</div>
<div class="t" style="left:609.20px;top:490.00px;font-size:8.8px;color:#222;font-weight:bold;transform:scaleX(0.8500);">$134,500.00</div>
<svg class="r" style="left:653.8px;top:489px" width="10" height="10" viewBox="0 0 10 10"><circle cx="5" cy="5" r="4.3" fill="none" stroke="#2b88d8" stroke-width="0.85"/><path d="M5 4.2 V7.4" stroke="#2b88d8" stroke-width="0.85"/><circle cx="5" cy="2.9" r="0.5" fill="#2b88d8"/></svg>
<div class="r" style="left:539.4px;top:513.5px;width:200.2px;height:1px;background:#f3f3f3;"></div>
<div class="r" style="left:635.1px;top:522px;width:49.6px;height:20px;background:#0078d4;border-radius:1px;"></div>
<div class="t" style="left:647.60px;top:528.00px;font-size:9.5px;color:#fff;font-weight:bold;transform:scaleX(0.8594);">Adjust</div>
<div class="r" style="left:690.3px;top:522px;width:51.3px;height:20px;background:#fff;box-sizing:border-box;border:1px solid #8a8a8a;border-radius:1px;"></div>
<div class="t" style="left:703.00px;top:528.00px;font-size:9.5px;color:#333;transform:scaleX(0.8657);">Cancel</div>
<div class="r" style="left:122px;top:579px;width:902px;height:11px;background:#f0f0f0;"></div>
<div class="r" style="left:134px;top:579.3px;width:841.3px;height:9.7px;background:#c1c1c1;"></div>
<svg class="r" style="left:126px;top:581px" width="5" height="7" viewBox="0 0 5 7"><path d="M4.2 0.6 L0.8 3.5 L4.2 6.4 Z" fill="#a3a3a3"/></svg>
<svg class="r" style="left:1015.5px;top:581px" width="5" height="7" viewBox="0 0 5 7"><path d="M0.8 0.6 L4.2 3.5 L0.8 6.4 Z" fill="#505050"/></svg>
</body></html>
